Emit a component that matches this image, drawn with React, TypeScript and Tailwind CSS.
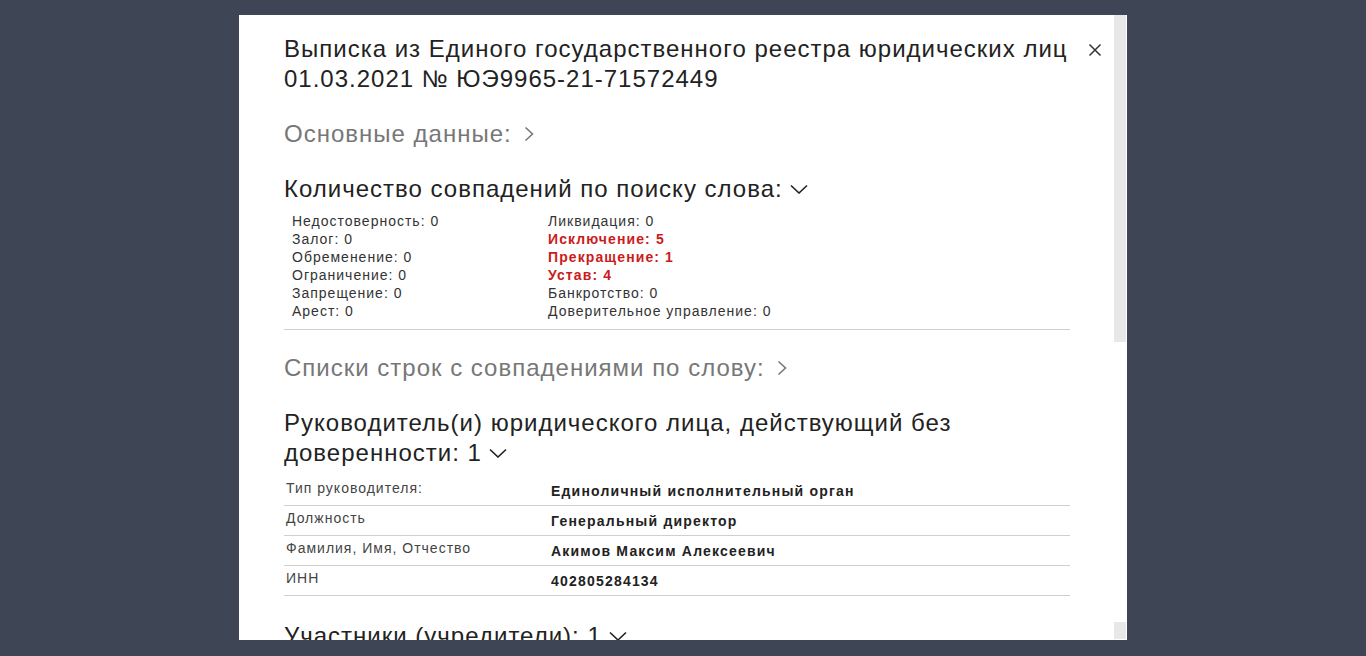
import React from "react";

const font = { fontFamily: '"Liberation Sans", Arial, sans-serif' };

function ChevronRight({ className = "" }: { className?: string }) {
  return (
    <svg width="12" height="16" viewBox="0 0 12 16" className={className} fill="none">
      <path d="M2.5 1.5 L9.5 8 L2.5 14.5" stroke="currentColor" strokeWidth="1.6" />
    </svg>
  );
}

function ChevronDown({ className = "" }: { className?: string }) {
  return (
    <svg width="18" height="10" viewBox="0 0 18 10" className={className} fill="none">
      <path d="M1 1.5 L9 9 L17 1.5" stroke="currentColor" strokeWidth="1.6" />
    </svg>
  );
}

const leftCounts = [
  ["Недостоверность", 0],
  ["Залог", 0],
  ["Обременение", 0],
  ["Ограничение", 0],
  ["Запрещение", 0],
  ["Арест", 0],
] as const;

const rightCounts = [
  ["Ликвидация", 0],
  ["Исключение", 5],
  ["Прекращение", 1],
  ["Устав", 4],
  ["Банкротство", 0],
  ["Доверительное управление", 0],
] as const;

const manager = [
  ["Тип руководителя:", "Единоличный исполнительный орган"],
  ["Должность", "Генеральный директор"],
  ["Фамилия, Имя, Отчество", "Акимов Максим Алексеевич"],
  ["ИНН", "402805284134"],
];

function CountItem({ label, value }: { label: string; value: number }) {
  return value > 0 ? (
    <div className="font-bold tracking-[1.1px] text-[#cc1b1b]">
      {label}: {value}
    </div>
  ) : (
    <div>
      {label}: {value}
    </div>
  );
}

export default function App() {
  return (
    <div className="h-screen w-full overflow-hidden bg-[#3e4555] pt-[15px] pl-[239px]" style={font}>
      <div className="relative flex h-[625px] w-[888px] overflow-hidden bg-white">
        {/* content */}
        <div className="w-[875px] shrink-0 pl-[45px] pt-[19px] tracking-[1px]">
          <div className="w-[790px]">
            <h1 className="text-[24px] leading-[30px] text-[#222]">
              Выписка из Единого государственного реестра юридических лиц 01.03.2021 № ЮЭ9965-21-71572449
            </h1>

            <div className="mt-[25px] flex items-center gap-[11px] text-[24px] leading-[30px] text-[#777]">
              <span>Основные данные:</span>
              <ChevronRight />
            </div>

            <div className="mt-[25px] flex items-center gap-[7px] text-[24px] leading-[30px] text-[#222]">
              <span>Количество совпадений по поиску слова:</span>
              <ChevronDown />
            </div>

            <div className="mt-[8px] grid w-[786px] grid-cols-[256px_1fr] pl-[8px] text-[14px] leading-[18px] text-[#333]">
              <div>
                {leftCounts.map(([l, v]) => (
                  <CountItem key={l} label={l} value={v} />
                ))}
              </div>
              <div>
                {rightCounts.map(([l, v]) => (
                  <CountItem key={l} label={l} value={v} />
                ))}
              </div>
            </div>

            <div className="mt-[9px] w-[786px] border-t border-[#cfcfcf]" />

            <div className="mt-[23px] flex items-center gap-[11px] text-[24px] leading-[30px] text-[#777]">
              <span>Списки строк с совпадениями по слову:</span>
              <ChevronRight />
            </div>

            <div className="mt-[25px] text-[24px] leading-[30px] text-[#222]">
              Руководитель(и) юридического лица, действующий без
              <br />
              <span className="inline-flex items-center gap-[7px]">
                доверенности: 1
                <ChevronDown />
              </span>
            </div>

            <div className="mt-[8px] w-[786px]">
              {manager.map(([label, value]) => (
                <div key={label} className="flex h-[30px] border-b border-[#cfcfcf] text-[14px] leading-[18px]">
                  <div className="w-[267px] shrink-0 pl-[2px] pt-[3px] text-[#444]">{label}</div>
                  <div className="pt-[6px] font-bold tracking-[1.2px] text-[#222]">{value}</div>
                </div>
              ))}
            </div>

            <div className="mt-[25px] flex items-center gap-[7px] text-[24px] leading-[30px] text-[#222]">
              <span>Участники (учредители): 1</span>
              <ChevronDown />
            </div>
          </div>
        </div>

        {/* close button */}
        <button className="absolute left-[848px] top-[27px] flex h-[16px] w-[16px] items-center justify-center text-[#333]">
          <svg width="14" height="14" viewBox="0 0 14 14" fill="none">
            <path d="M1.5 1.5 L12.5 12.5 M12.5 1.5 L1.5 12.5" stroke="currentColor" strokeWidth="1.5" />
          </svg>
        </button>

        {/* scrollbar */}
        <div className="flex w-[12px] shrink-0 flex-col">
          <div className="h-[327px] bg-[#e8e8e8]" />
          <div className="flex-1" />
          <div className="h-[17px] bg-[#e8e8e8]" />
          <div className="h-[1px]" />
        </div>
      </div>
    </div>
  );
}
